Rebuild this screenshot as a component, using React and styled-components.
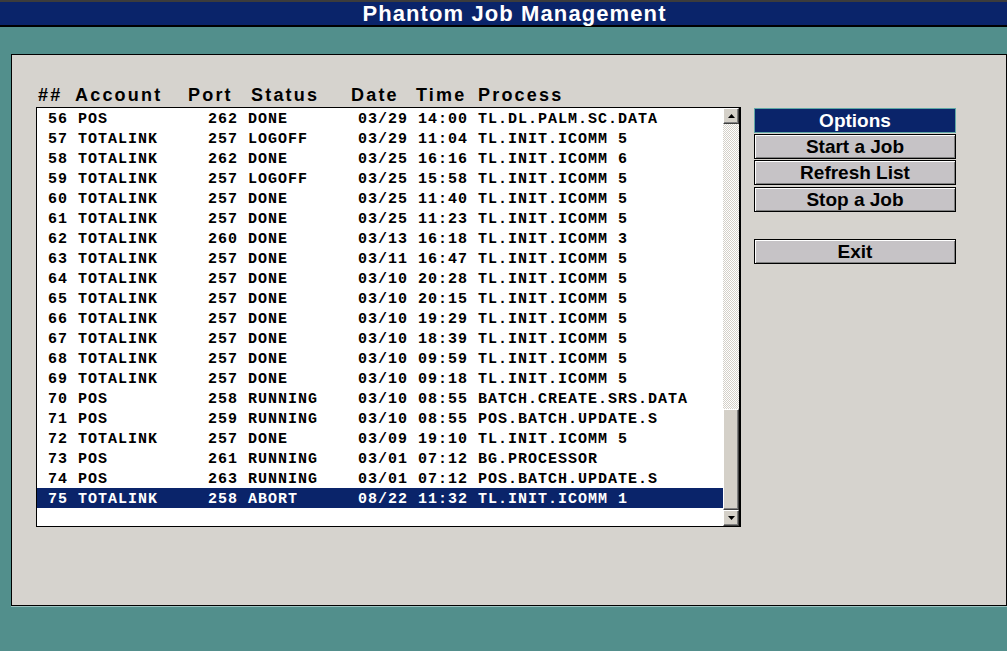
import React from "react";
import styled, { createGlobalStyle } from "styled-components";

const jobs = [
  ["56", "POS", "262", "DONE", "03/29", "14:00", "TL.DL.PALM.SC.DATA"],
  ["57", "TOTALINK", "257", "LOGOFF", "03/29", "11:04", "TL.INIT.ICOMM 5"],
  ["58", "TOTALINK", "262", "DONE", "03/25", "16:16", "TL.INIT.ICOMM 6"],
  ["59", "TOTALINK", "257", "LOGOFF", "03/25", "15:58", "TL.INIT.ICOMM 5"],
  ["60", "TOTALINK", "257", "DONE", "03/25", "11:40", "TL.INIT.ICOMM 5"],
  ["61", "TOTALINK", "257", "DONE", "03/25", "11:23", "TL.INIT.ICOMM 5"],
  ["62", "TOTALINK", "260", "DONE", "03/13", "16:18", "TL.INIT.ICOMM 3"],
  ["63", "TOTALINK", "257", "DONE", "03/11", "16:47", "TL.INIT.ICOMM 5"],
  ["64", "TOTALINK", "257", "DONE", "03/10", "20:28", "TL.INIT.ICOMM 5"],
  ["65", "TOTALINK", "257", "DONE", "03/10", "20:15", "TL.INIT.ICOMM 5"],
  ["66", "TOTALINK", "257", "DONE", "03/10", "19:29", "TL.INIT.ICOMM 5"],
  ["67", "TOTALINK", "257", "DONE", "03/10", "18:39", "TL.INIT.ICOMM 5"],
  ["68", "TOTALINK", "257", "DONE", "03/10", "09:59", "TL.INIT.ICOMM 5"],
  ["69", "TOTALINK", "257", "DONE", "03/10", "09:18", "TL.INIT.ICOMM 5"],
  ["70", "POS", "258", "RUNNING", "03/10", "08:55", "BATCH.CREATE.SRS.DATA"],
  ["71", "POS", "259", "RUNNING", "03/10", "08:55", "POS.BATCH.UPDATE.S"],
  ["72", "TOTALINK", "257", "DONE", "03/09", "19:10", "TL.INIT.ICOMM 5"],
  ["73", "POS", "261", "RUNNING", "03/01", "07:12", "BG.PROCESSOR"],
  ["74", "POS", "263", "RUNNING", "03/01", "07:12", "POS.BATCH.UPDATE.S"],
  ["75", "TOTALINK", "258", "ABORT", "08/22", "11:32", "TL.INIT.ICOMM 1"],
];

const GlobalStyle = createGlobalStyle`
  html, body {
    margin: 0;
    padding: 0;
    background: #528f8c;
    height: 651px;
    overflow: hidden;
  }
`;

const Screen = styled.div`
  width: 1007px;
  height: 651px;
  display: flex;
  flex-direction: column;
  font-family: "Liberation Sans", Arial, sans-serif;
`;

const TitleBar = styled.div`
  height: 23px;
  background: #0a246a;
  border-top: 2px solid #3c3c3c;
  border-bottom: 2px solid #000;
  display: flex;
  align-items: center;
  justify-content: center;
  padding-left: 22px;
  color: #fff;
  font-weight: bold;
  font-size: 22px;
  letter-spacing: 1.1px;
`;

const Panel = styled.div`
  margin: 27px 0 0 11px;
  width: 996px;
  height: 552px;
  box-sizing: border-box;
  background: #d6d3ce;
  border: 1px solid #000;
  box-shadow: 0 1px 0 #9cc4c2;
  display: flex;
  align-items: flex-start;
  padding: 30px 0 0 24px;
  gap: 13px;
`;

const ListColumn = styled.div`
  width: 705px;
  display: flex;
  flex-direction: column;
`;

const HeaderRow = styled.div`
  height: 22px;
  box-sizing: border-box;
  padding: 0 0 4px 2px;
  display: grid;
  grid-template-columns: 37px 113px 63px 100px 65px 62px 1fr;
  align-items: center;
  font-weight: bold;
  font-size: 18px;
  letter-spacing: 2.2px;
  color: #000;
`;

const ListBox = styled.div`
  height: 420px;
  box-sizing: border-box;
  background: #fff;
  border: 1px solid #000;
  border-right-width: 2px;
  display: flex;
`;

const Rows = styled.div`
  flex: 1;
`;

const Row = styled.div`
  height: 20px;
  box-sizing: border-box;
  padding: 2px 0 0 11px;
  display: grid;
  grid-template-columns: 30px 130px 40px 110px 60px 60px 1fr;
  align-items: center;
  font-family: "Liberation Mono", "Courier New", monospace;
  font-weight: bold;
  font-size: 15px;
  letter-spacing: 1px;
  white-space: pre;
  background: ${(p) => (p.$selected ? "#0a246a" : "transparent")};
  color: ${(p) => (p.$selected ? "#fff" : "#000")};
`;

const ScrollBar = styled.div`
  width: 16px;
  display: flex;
  flex-direction: column;
`;

const ArrowButton = styled.div`
  height: 16px;
  box-sizing: border-box;
  background: #d4d0c8;
  border-top: 1px solid #fff;
  border-left: 1px solid #fff;
  border-right: 1px solid #404040;
  border-bottom: 1px solid #404040;
  box-shadow: inset -1px -1px 0 #808080;
  display: flex;
  align-items: center;
  justify-content: center;
`;

const Track = styled.div`
  flex: 1;
  background-image: conic-gradient(#d4d0c8 25%, #fff 0 50%, #d4d0c8 0 75%, #fff 0);
  background-size: 2px 2px;
  display: flex;
  flex-direction: column;
  justify-content: flex-end;
`;

const Thumb = styled.div`
  height: 101px;
  box-sizing: border-box;
  background: #d4d0c8;
  border-top: 1px solid #fff;
  border-left: 1px solid #fff;
  border-right: 1px solid #404040;
  border-bottom: 1px solid #404040;
  box-shadow: inset -1px -1px 0 #808080;
`;

const Arrow = ({ down }) => (
  <svg width="7" height="4" viewBox="0 0 7 4">
    <path d={down ? "M0 0h7L3.5 4z" : "M0 4h7L3.5 0z"} fill="#000" />
  </svg>
);

const ButtonColumn = styled.div`
  width: 202px;
  padding-top: 23px;
  display: flex;
  flex-direction: column;
  gap: 1px;
`;

const Button = styled.div`
  height: 25px;
  box-sizing: border-box;
  display: flex;
  align-items: center;
  justify-content: center;
  font-weight: bold;
  font-size: 19px;
  background: ${(p) => (p.$primary ? "#0a246a" : "#c6c3c6")};
  color: ${(p) => (p.$primary ? "#fff" : "#000")};
  border: 1px solid ${(p) => (p.$primary ? "#5fa8a6" : "#000")};
  box-shadow: ${(p) =>
    p.$primary ? "none" : "inset 1px 1px 0 #fff, inset -1px -1px 0 #808080"};
  margin-top: ${(p) => p.$gap || 0}px;
`;

export default function App() {
  return (
    <Screen>
      <GlobalStyle />
      <TitleBar>Phantom Job Management</TitleBar>
      <Panel>
        <ListColumn>
          <HeaderRow>
            <span>##</span>
            <span>Account</span>
            <span>Port</span>
            <span>Status</span>
            <span>Date</span>
            <span>Time</span>
            <span>Process</span>
          </HeaderRow>
          <ListBox>
            <Rows>
              {jobs.map((j, i) => (
                <Row key={j[0]} $selected={i === jobs.length - 1}>
                  {j.map((c, k) => (
                    <span key={k}>{c}</span>
                  ))}
                </Row>
              ))}
            </Rows>
            <ScrollBar>
              <ArrowButton>
                <Arrow />
              </ArrowButton>
              <Track>
                <Thumb />
              </Track>
              <ArrowButton>
                <Arrow down />
              </ArrowButton>
            </ScrollBar>
          </ListBox>
        </ListColumn>
        <ButtonColumn>
          <Button $primary>Options</Button>
          <Button>Start a Job</Button>
          <Button>Refresh List</Button>
          <Button $gap={1}>Stop a Job</Button>
          <Button $gap={26}>Exit</Button>
        </ButtonColumn>
      </Panel>
    </Screen>
  );
}
